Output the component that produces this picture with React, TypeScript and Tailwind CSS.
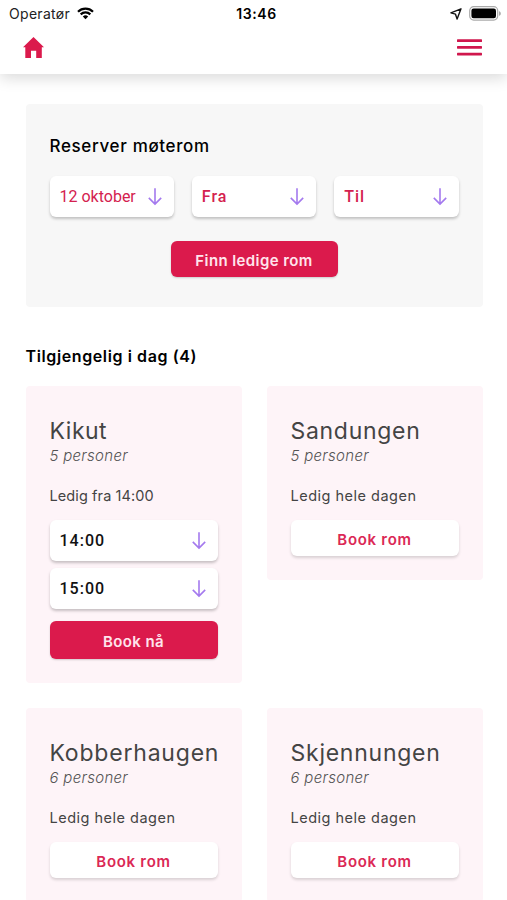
import { clsx } from 'clsx';

interface Room {
  name: string;
  seats: number;
  status: string;
  times?: string[];
  nameClass: string;
  statusClass: string;
}

const rooms: Room[] = [
  {
    name: 'Kikut',
    seats: 5,
    status: 'Ledig fra 14:00',
    times: ['14:00', '15:00'],
    nameClass: 'tracking-[0.5px]',
    statusClass: 'tracking-[0.1px]',
  },
  { name: 'Sandungen', seats: 5, status: 'Ledig hele dagen', nameClass: 'tracking-[0.7px]', statusClass: 'tracking-[0.5px]' },
  { name: 'Kobberhaugen', seats: 6, status: 'Ledig hele dagen', nameClass: 'tracking-[0.8px]', statusClass: 'tracking-[0.5px]' },
  { name: 'Skjennungen', seats: 6, status: 'Ledig hele dagen', nameClass: 'tracking-[0.75px]', statusClass: 'tracking-[0.5px]' },
];

function ArrowDown() {
  return (
    <svg width="14" height="18" viewBox="0 0 14 18" fill="none" stroke="#a47aee" strokeWidth="1.6" className="shrink-0">
      <path d="M7 .3V16M.8 9.9 7 16.1l6.2-6.2" />
    </svg>
  );
}

function StatusBar() {
  return (
    <div className="grid h-[27px] grid-cols-3 items-center pl-[9px] pr-[6px] font-[Inter,sans-serif] text-black">
      <div className="flex items-center gap-[7px]">
        <span className="text-[14px] leading-[27px] tracking-[0.3px] text-[#222]">Operatør</span>
        <svg width="17" height="13" viewBox="0 0 17 13" fill="none" stroke="#000" strokeWidth="2.2">
          <path d="M1 4.7a10.6 10.6 0 0 1 15 0M3.7 7.4a6.8 6.8 0 0 1 9.6 0" />
          <path d="M8.5 12.3 5.8 9.6a3.8 3.8 0 0 1 5.4 0z" fill="#000" stroke="none" />
        </svg>
      </div>
      <span className="pl-[3px] text-center text-[14px] font-semibold leading-[27px] tracking-[0.6px]">13:46</span>
      <div className="flex items-center justify-end gap-[7px]">
        <svg width="12" height="12" viewBox="0 0 12 12" fill="none" stroke="#111" strokeWidth="1.4" strokeLinejoin="round">
          <path d="M11 .8.9 4.8l4.6 1.4 1.6 4.9z" />
        </svg>
        <svg width="32" height="15" viewBox="0 0 32 15">
          <rect x=".7" y=".7" width="28" height="13.4" rx="4" fill="#fff" stroke="#aaa" strokeWidth="1.2" />
          <rect x="2.4" y="2.5" width="24.6" height="9.8" rx="2.2" fill="#000" />
          <path d="M30.2 5.2v4.6c2-.7 2-3.9 0-4.6z" fill="#999" />
        </svg>
      </div>
    </div>
  );
}

function Header() {
  return (
    <header className="relative h-[74px] bg-white shadow-[0_4px_14px_rgba(0,0,0,0.15)]">
      <StatusBar />
      <div className="flex h-10 items-center justify-between pl-[23px] pr-[25px]">
        <svg width="21" height="21" viewBox="0 0 21 21" fill="#db1a4c">
          <path d="M10.5 0 21 10.3h-2.2V21h-5.6v-7.2H8V21H2.3V10.3H0z" />
        </svg>
        <svg width="25" height="17" viewBox="0 0 25 17" fill="#d0174d">
          <rect width="25" height="2.7" y=".3" rx=".6" />
          <rect width="25" height="2.7" y="7" rx=".6" />
          <rect width="25" height="2.7" y="13.7" rx=".6" />
        </svg>
      </div>
    </header>
  );
}

function SelectBox({ label, className }: { label: string; className?: string }) {
  return (
    <button
      type="button"
      className={clsx(
        'flex h-[41px] w-full items-center justify-between rounded-[6px] bg-white pl-[10px] pr-3 font-[Roboto,sans-serif] shadow-[0_2px_3px_rgba(0,0,0,0.22)]',
        className,
      )}
    >
      <span className="whitespace-nowrap">{label}</span>
      <ArrowDown />
    </button>
  );
}

function RoomCard({ room }: { room: Room }) {
  return (
    <article className="rounded-[4px] bg-[#fef4f8] px-6 pb-6 pt-[30px]">
      <h3 className={clsx('whitespace-nowrap text-[23px] font-normal leading-[30px] text-[#444]', room.nameClass)}>{room.name}</h3>
      <p className="text-[15px] font-light italic leading-5 tracking-[0.3px] text-[#555]">{room.seats} personer</p>
      <p className={clsx('mt-5 whitespace-nowrap text-[14.5px] leading-5 text-[#444]', room.statusClass)}>{room.status}</p>
      {room.times ? (
        <>
          <div className="mt-[14px] flex flex-col gap-[7px]">
            {room.times.map((t) => (
              <SelectBox key={t} label={t} className="text-[16px] font-medium tracking-[1px] text-[#111]" />
            ))}
          </div>
          <button
            type="button"
            className="mt-3 h-[38px] w-full rounded-[6px] bg-[#db1a4c] pt-[4px] text-[15px] font-semibold tracking-[0.4px] text-[#ffe4ec] shadow-[0_1px_2px_rgba(0,0,0,0.18)]"
          >
            Book nå
          </button>
        </>
      ) : (
        <button
          type="button"
          className="mt-[14px] h-9 w-full rounded-[6px] bg-white pt-[4px] text-[15px] font-semibold tracking-[0.7px] text-[#db2855] shadow-[0_2px_3px_rgba(0,0,0,0.15)]"
        >
          Book rom
        </button>
      )}
    </article>
  );
}

export default function App() {
  return (
    <div className="h-[900px] w-full overflow-hidden bg-white font-[Inter,sans-serif]">
      <Header />

      <main className="pl-[25.5px] pr-[24.5px] pt-[30px]">
        {/* Search panel */}
        <section className="h-[203px] rounded-[4px] bg-[#f7f7f7] px-6 pt-[30px]">
          <h2 className="text-[17px] font-medium leading-6 tracking-[0.65px] text-black">Reserver møterom</h2>
          <div className="mt-[18px] grid grid-cols-3 gap-[18px]">
            <SelectBox label="12 oktober" className="text-[16px] text-[#d4214f]" />
            <SelectBox label="Fra" className="text-[16px] font-medium tracking-[1px] text-[#d4214f]" />
            <SelectBox label="Til" className="text-[16px] font-medium tracking-[1px] text-[#d4214f]" />
          </div>
          <div className="mt-6 flex justify-center">
            <button
              type="button"
              className="h-9 w-[167px] rounded-[6px] bg-[#db1a4c] pt-[4px] text-[15px] font-semibold tracking-[0.4px] text-[#ffe4ec] shadow-[0_1px_2px_rgba(0,0,0,0.18)]"
            >
              Finn ledige rom
            </button>
          </div>
        </section>

        {/* Available rooms */}
        <h2 className="mt-[37px] text-[16px] font-semibold leading-6 tracking-[0.6px] text-black">Tilgjengelig i dag (4)</h2>
        <section className="mt-[18px] grid grid-cols-2 items-start gap-x-[25px] gap-y-[25px]">
          {rooms.map((room) => (
            <RoomCard key={room.name} room={room} />
          ))}
        </section>
      </main>
    </div>
  );
}
